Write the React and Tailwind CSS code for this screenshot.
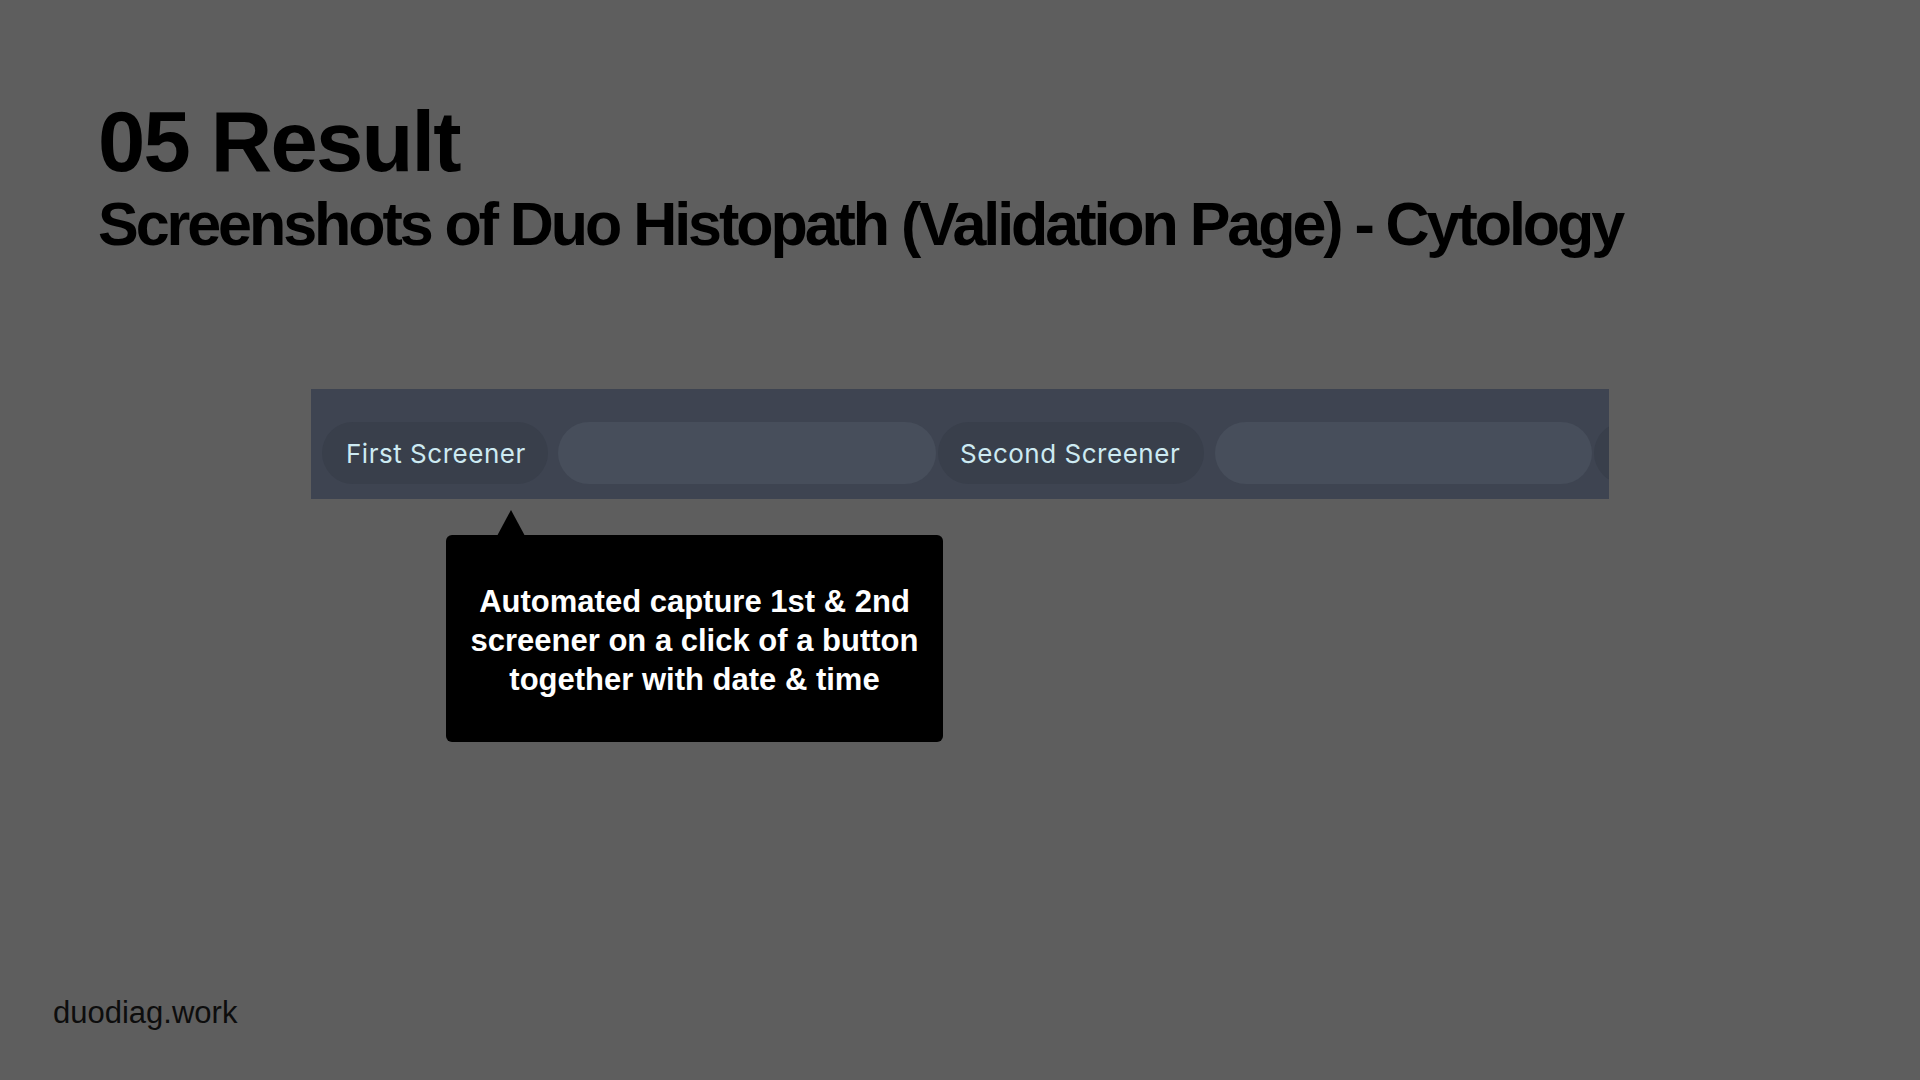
import React from 'react'

// Slide: validation page result with screener bar + callout
export default function App() {
  const sans = { fontFamily: '"Liberation Sans", Arial, sans-serif' }
  const ui = { fontFamily: 'Inter, "Noto Sans", sans-serif' }

  return (
    <div className="w-[1920px] h-[1080px] bg-[#5e5e5e] flex flex-col overflow-hidden" style={sans}>
      {/* === TITLES === */}
      <div className="pt-[99px] pl-[98px] text-black">
        <h1 className="text-[85px] leading-none font-bold tracking-[-0.021em]">05 Result</h1>
        <h2 className="mt-[10px] text-[61px] leading-none font-bold tracking-[-0.05em]">
          Screenshots of Duo Histopath (Validation Page) - Cytology
        </h2>
      </div>

      {/* === SCREENER BAR === */}
      <div className="relative ml-[311px] mt-[134px] w-[1298px]">
        <div className="h-[110px] bg-[#3e4451] pt-[33px] pl-[11px] flex items-start overflow-hidden" style={ui}>
          <div className="shrink-0 w-[226px] h-[62px] rounded-full bg-[#393f4b] flex items-center pl-[24px] text-[26px] tracking-[0.02em] text-[#cdeaf2]">
            First Screener
          </div>
          <div className="shrink-0 ml-[10px] w-[378px] h-[62px] rounded-full bg-[#474e5b]" />
          <div className="shrink-0 ml-[2px] w-[266px] h-[62px] rounded-full bg-[#393f4b] flex items-center pl-[22px] text-[26px] tracking-[0.02em] text-[#cdeaf2]">
            Second Screener
          </div>
          <div className="shrink-0 ml-[11px] w-[377px] h-[62px] rounded-full bg-[#474e5b]" />
          <div className="shrink-0 ml-[2px] w-[226px] h-[62px] rounded-full bg-[#393f4b]" />
        </div>

        {/* callout */}
        <div className="absolute left-[135px] top-[146px] w-[497px] h-[207px] bg-black rounded-[6px] flex items-center justify-center pt-[3px]">
          <svg className="absolute left-[51px] -top-[25px]" width="28" height="26" viewBox="0 0 28 26">
            <polygon points="14,0 28,26 0,26" fill="#000" />
          </svg>
          <p className="text-white text-[31px] leading-[39px] font-bold text-center">
            Automated capture 1st &amp; 2nd
            <br />
            screener on a click of a button
            <br />
            together with date &amp; time
          </p>
        </div>
      </div>

      {/* === FOOTER === */}
      <div className="mt-auto pb-[52px] pl-[53px] text-[31px] leading-none text-[#0d0d0d]">duodiag.work</div>
    </div>
  )
}
